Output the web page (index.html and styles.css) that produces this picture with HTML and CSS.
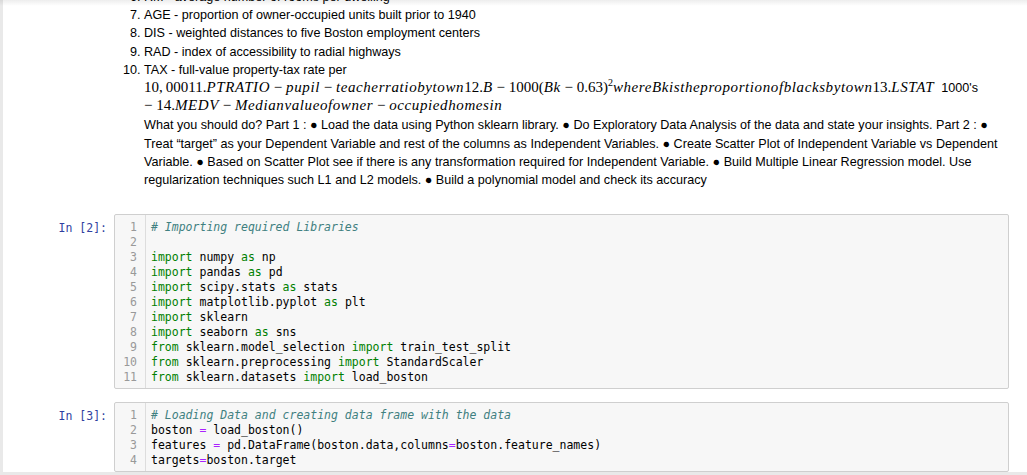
FILE: index.html
```html
<!DOCTYPE html>
<html>
<head>
<meta charset="utf-8">
<link rel="stylesheet" href="styles.css">
</head>
<body>
<div class="notebook">
  <div class="cell md">
    <div class="prompt"></div>
    <div class="rendered">
      <ol class="features" start="6">
        <li>RM - average number of rooms per dwelling</li>
        <li>AGE - proportion of owner-occupied units built prior to 1940</li>
        <li>DIS - weighted distances to five Boston employment centers</li>
        <li>RAD - index of accessibility to radial highways</li>
        <li>TAX - full-value property-tax rate per
          <div class="line"><span class="math">10,&thinsp;00011.<i>PTRATIO</i> − <i>pupil</i> − <i>teacherratiobytown</i>12.<i>B</i> − 1000(<i>Bk</i> − 0.63)<sup>2</sup><i>whereBkistheproportionofblacksbytown</i>13.<i>LSTAT</i></span>&nbsp; 1000's</div>
          <div class="line"><span class="math">− 14.<i>MEDV</i> − <i>Medianvalueofowner</i> − <i>occupiedhomesin</i></span></div>
          <div class="task">What you should do? Part 1 : ● Load the data using Python sklearn library. ● Do Exploratory Data Analysis of the data and state your insights. Part 2 : ● Treat “target” as your Dependent Variable and rest of the columns as Independent Variables. ● Create Scatter Plot of Independent Variable vs Dependent Variable. ● Based on Scatter Plot see if there is any transformation required for Independent Variable. ● Build Multiple Linear Regression model. Use regularization techniques such L1 and L2 models. ● Build a polynomial model and check its accuracy</div>
        </li>
      </ol>
    </div>
  </div>

  <div class="cell code first">
    <div class="prompt">In&nbsp;[2]:</div>
    <div class="input">
      <div class="gutter">1<br>2<br>3<br>4<br>5<br>6<br>7<br>8<br>9<br>10<br>11</div>
      <pre class="source"><span class="c"># Importing required Libraries</span>

<span class="k">import</span> numpy <span class="k">as</span> np
<span class="k">import</span> pandas <span class="k">as</span> pd
<span class="k">import</span> scipy.stats <span class="k">as</span> stats
<span class="k">import</span> matplotlib.pyplot <span class="k">as</span> plt
<span class="k">import</span> sklearn
<span class="k">import</span> seaborn <span class="k">as</span> sns
<span class="k">from</span> sklearn.model_selection <span class="k">import</span> train_test_split
<span class="k">from</span> sklearn.preprocessing <span class="k">import</span> StandardScaler
<span class="k">from</span> sklearn.datasets <span class="k">import</span> load_boston</pre>
    </div>
  </div>

  <div class="cell code">
    <div class="prompt">In&nbsp;[3]:</div>
    <div class="input">
      <div class="gutter">1<br>2<br>3<br>4</div>
      <pre class="source"><span class="c"># Loading Data and creating data frame with the data</span>
boston <span class="o">=</span> load_boston()
features <span class="o">=</span> pd.DataFrame(boston.data,columns<span class="o">=</span>boston.feature_names)
targets<span class="o">=</span>boston.target</pre>
    </div>
  </div>
</div>
</body>
</html>
```
FILE: styles.css
```css
html, body {
  margin: 0;
  padding: 0;
}
body {
  background: #e9e9e9;
  overflow: hidden;
  height: 475px;
  position: relative;
}
body::before {
  content: "";
  position: absolute;
  left: 0;
  right: 0;
  top: 0;
  height: 6px;
  background: linear-gradient(to bottom, rgba(0,0,0,0.07), rgba(0,0,0,0));
  z-index: 2;
}
.notebook {
  margin-left: 3px;
  background: #fff;
  min-height: 475px;
  padding-right: 18px;
  box-sizing: border-box;
}
.cell {
  display: flex;
  align-items: flex-start;
}
.prompt {
  flex: 0 0 111px;
  box-sizing: border-box;
  text-align: right;
  padding-right: 7px;
  font-family: "DejaVu Sans Mono", "Liberation Mono", monospace;
  font-size: 11.5px;
  line-height: 15px;
  color: #303f9f;
}
.md {
  margin-top: -12px;
}
.rendered {
  flex: 1;
  padding-left: 30px;
  font-family: "Liberation Sans", Arial, sans-serif;
  font-size: 12.6px;
  line-height: 18.2px;
  color: #000;
}
.features {
  margin: 0;
  padding: 0;
}
.line {
  height: 18.2px;
  line-height: 18.2px;
  white-space: nowrap;
}
.task {
  margin-top: 1px;
}
.math {
  font-family: "Liberation Serif", "Times New Roman", serif;
  font-size: 15px;
  line-height: 1;
}
.math i {
  font-style: italic;
  letter-spacing: 0.6px;
}
.math sup {
  font-size: 10px;
  line-height: 0;
}
.code {
  margin-top: 13px;
}
.code.first {
  margin-top: 25px;
}
.code .prompt {
  padding-top: 7px;
}
.input {
  flex: 1;
  display: flex;
  background: #f7f7f7;
  border: 1px solid #cfcfcf;
  border-radius: 2px;
  padding: 5px 0 3px 0;
  font-family: "DejaVu Sans Mono", "Liberation Mono", monospace;
  font-size: 11.5px;
  line-height: 15px;
}
.gutter {
  flex: 0 0 22px;
  text-align: right;
  padding-right: 8px;
  border-right: 1px solid #dddddd;
  color: #999;
  margin-top: -5px;
  margin-bottom: -3px;
  padding-top: 5px;
  padding-bottom: 3px;
}
.source {
  margin: 0;
  padding-left: 5px;
  font: inherit;
  color: #000;
  white-space: pre;
}
.k {
  color: #008000;
}
.c {
  color: #408080;
  font-style: italic;
}
.o {
  color: #aa22ff;
}
```
